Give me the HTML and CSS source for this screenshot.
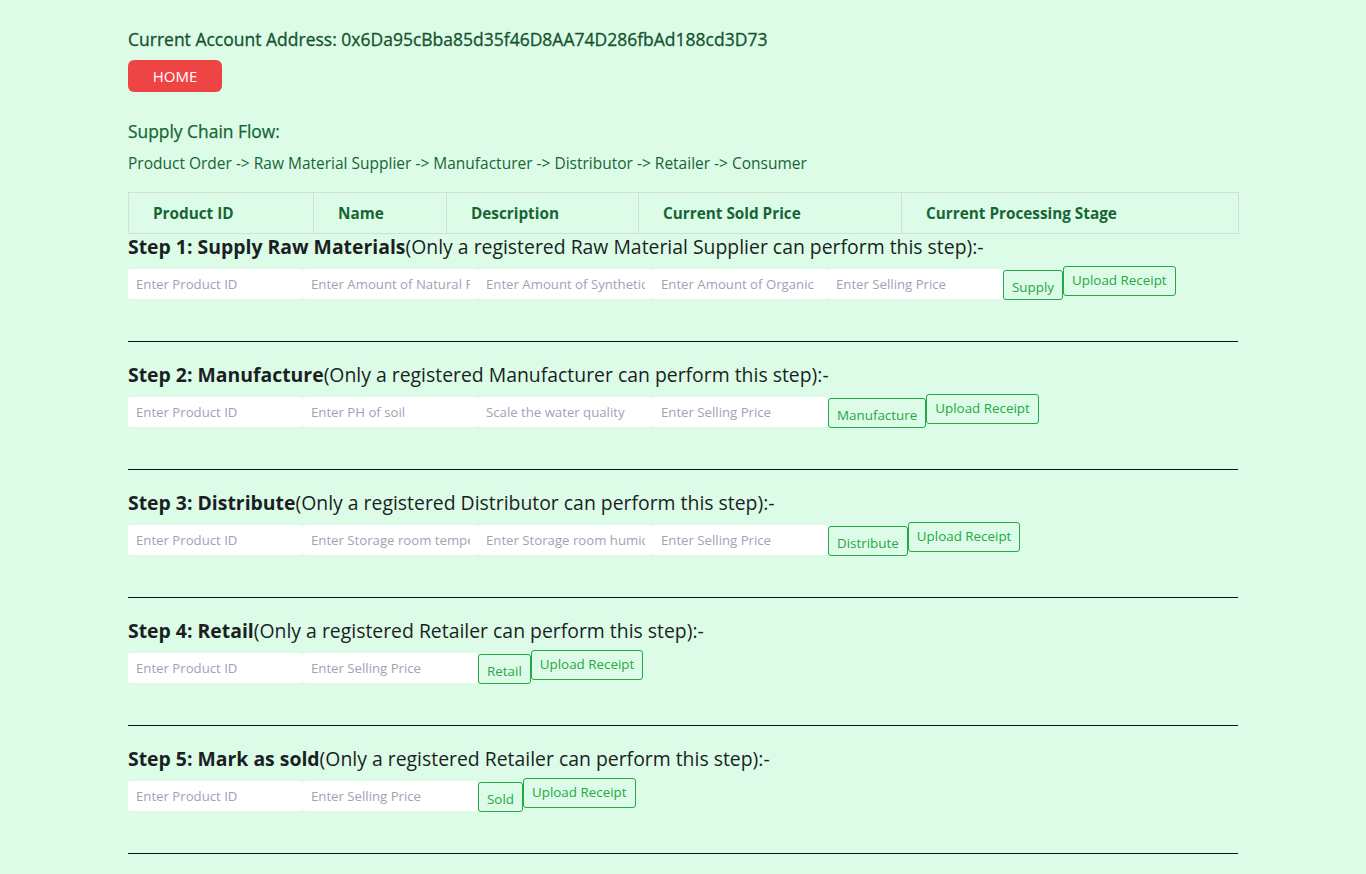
FILE: index.html
```html
<!DOCTYPE html>
<html>
<head>
<meta charset="utf-8">
<link rel="stylesheet" href="styles.css">
</head>
<body>
<div class="container">
  <div class="account">Current Account Address: 0x6Da95cBba85d35f46D8AA74D286fbAd188cd3D73</div>
  <button class="home">HOME</button>
  <div class="flow-title">Supply Chain Flow:</div>
  <div class="flow">Product Order -&gt; Raw Material Supplier -&gt; Manufacturer -&gt; Distributor -&gt; Retailer -&gt; Consumer</div>
  <table class="products">
    <thead>
      <tr>
        <th class="c1">Product ID</th>
        <th class="c2">Name</th>
        <th class="c3">Description</th>
        <th class="c4">Current Sold Price</th>
        <th class="c5">Current Processing Stage</th>
      </tr>
    </thead>
  </table>

  <section class="step">
    <h5 class="step-title"><b>Step 1: Supply Raw Materials</b>(Only a registered Raw Material Supplier can perform this step):-</h5>
    <form class="row">
      <input class="field" placeholder="Enter Product ID">
      <input class="field" placeholder="Enter Amount of Natural Fertilizer">
      <input class="field" placeholder="Enter Amount of Synthetic Fertilizer">
      <input class="field" placeholder="Enter Amount of Organic">
      <input class="field" placeholder="Enter Selling Price">
      <button type="button" class="btn act">Supply</button>
      <button type="button" class="btn up">Upload Receipt</button>
    </form>
    <hr>
  </section>

  <section class="step">
    <h5 class="step-title"><b>Step 2: Manufacture</b>(Only a registered Manufacturer can perform this step):-</h5>
    <form class="row">
      <input class="field" placeholder="Enter Product ID">
      <input class="field" placeholder="Enter PH of soil">
      <input class="field" placeholder="Scale the water quality">
      <input class="field" placeholder="Enter Selling Price">
      <button type="button" class="btn act">Manufacture</button>
      <button type="button" class="btn up">Upload Receipt</button>
    </form>
    <hr>
  </section>

  <section class="step">
    <h5 class="step-title"><b>Step 3: Distribute</b>(Only a registered Distributor can perform this step):-</h5>
    <form class="row">
      <input class="field" placeholder="Enter Product ID">
      <input class="field" placeholder="Enter Storage room temperature">
      <input class="field" placeholder="Enter Storage room humidity">
      <input class="field" placeholder="Enter Selling Price">
      <button type="button" class="btn act">Distribute</button>
      <button type="button" class="btn up">Upload Receipt</button>
    </form>
    <hr>
  </section>

  <section class="step">
    <h5 class="step-title"><b>Step 4: Retail</b>(Only a registered Retailer can perform this step):-</h5>
    <form class="row">
      <input class="field" placeholder="Enter Product ID">
      <input class="field" placeholder="Enter Selling Price">
      <button type="button" class="btn act">Retail</button>
      <button type="button" class="btn up">Upload Receipt</button>
    </form>
    <hr>
  </section>

  <section class="step">
    <h5 class="step-title"><b>Step 5: Mark as sold</b>(Only a registered Retailer can perform this step):-</h5>
    <form class="row">
      <input class="field" placeholder="Enter Product ID">
      <input class="field" placeholder="Enter Selling Price">
      <button type="button" class="btn act">Sold</button>
      <button type="button" class="btn up">Upload Receipt</button>
    </form>
    <hr>
  </section>
</div>
</body>
</html>
```
FILE: styles.css
```css
* { box-sizing: border-box; }
html, body {
  margin: 0;
  padding: 0;
  background: #dcfce7;
  font-family: "Open Sans", "Noto Sans", sans-serif;
  color: #212529;
}
.container {
  width: 1110px;
  margin: 0 auto;
  padding-top: 26px;
}
.account {
  font-size: 17.5px;
  line-height: 26px;
  color: #14532d;
  -webkit-text-stroke: 0.3px #14532d;
}
.home {
  display: block;
  margin-top: 8px;
  width: 94px;
  height: 32px;
  border: none;
  border-radius: 6px;
  background: #ef4444;
  color: #fff;
  font-family: inherit;
  font-size: 15px;
  padding: 0;
}
.flow-title {
  margin-top: 27px;
  font-size: 17.4px;
  line-height: 24px;
  color: #166534;
  -webkit-text-stroke: 0.25px #166534;
}
.flow {
  margin-top: 9px;
  font-size: 15.5px;
  line-height: 22px;
  color: #166534;
}
.products {
  margin-top: 18px;
  width: 1110px;
  border-collapse: collapse;
  table-layout: fixed;
}
.products th {
  border: 1px solid #d9ddd9;
  height: 41px;
  padding: 0 0 0 24px;
  text-align: left;
  font-size: 15.3px;
  font-weight: 700;
  color: #166534;
}
.c1 { width: 185px; }
.c2 { width: 133px; }
.c3 { width: 192px; }
.c4 { width: 263px; }
.c5 { width: 337px; }
.step-title {
  margin: 0;
  font-size: 19.4px;
  line-height: 26px;
  font-weight: 400;
  color: #1a1f24;
}
.step-title b { font-weight: 700; }
.step + .step .step-title { margin-top: 20px; }
.row {
  display: flex;
  align-items: flex-start;
  margin: 9px 0 0 0;
}
.field {
  width: 175px;
  height: 30px;
  border: none;
  border-radius: 3px;
  background: #fff;
  padding: 0 8px;
  font-family: inherit;
  font-size: 13.2px;
  color: #333;
  outline: none;
}
.field::placeholder { color: #9ea3b5; }
.btn {
  height: 30px;
  border: 1px solid #22a845;
  border-radius: 3px;
  background: transparent;
  color: #28a745;
  font-family: inherit;
  font-size: 13.4px;
  padding: 4px 8px 0;
}
.act { margin-top: 1px; }
.up { margin-top: -3px; padding: 0 8px 2px; }
hr {
  margin: 41px 0 0 0;
  border: none;
  border-top: 1px solid #111;
  height: 0;
}
```
